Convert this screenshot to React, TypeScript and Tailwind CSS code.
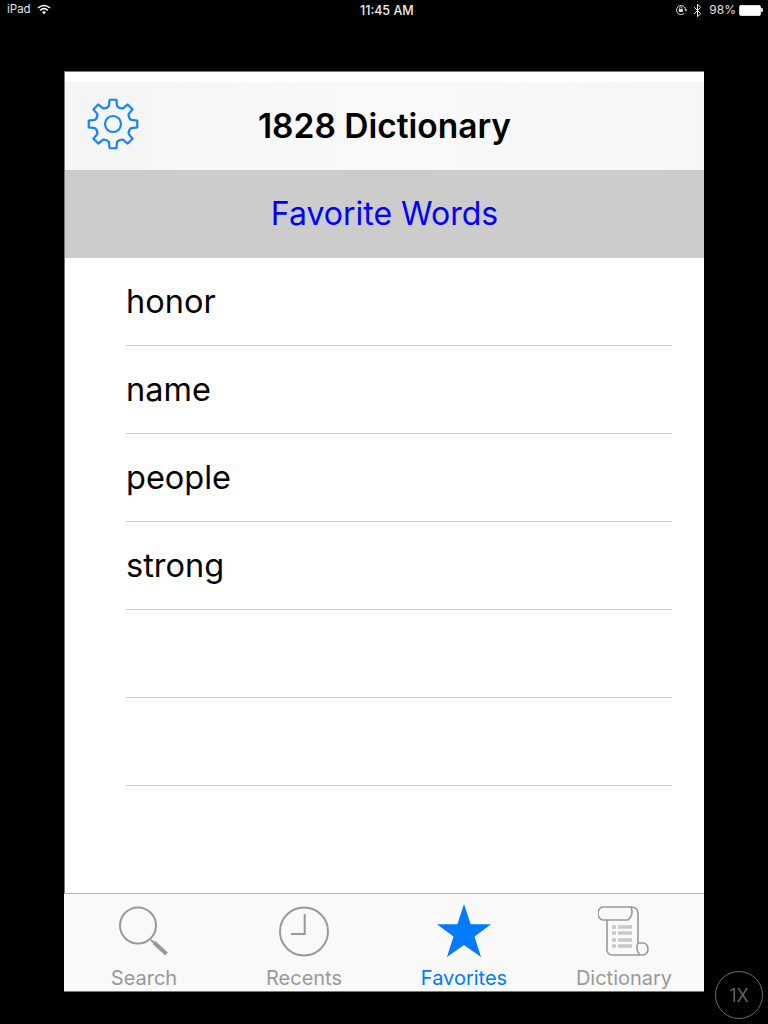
import React from 'react';
import { Bluetooth } from 'lucide-react';

const words = ['honor', 'name', 'people', 'strong', '', ''];

const gearPath = () => {
  const teeth = 8;
  const pts: string[] = [];
  const step = (Math.PI * 2) / teeth;
  for (let i = 0; i < teeth; i++) {
    const a = i * step - Math.PI / 2;
    const p = (r: number, d: number) =>
      `${(26 + r * Math.cos(a + d)).toFixed(2)} ${(26 + r * Math.sin(a + d)).toFixed(2)}`;
    pts.push(`${i === 0 ? 'M' : 'L'}${p(18.5, -0.22)}`);
    pts.push(`L${p(24.5, -0.14)}`);
    pts.push(`L${p(24.5, 0.14)}`);
    pts.push(`L${p(18.5, 0.22)}`);
    pts.push(`Q${p(16.5, step / 2)} ${p(18.5, step - 0.22)}`);
  }
  return pts.join(' ') + ' Z';
};

const StatusBar = () => (
  <div className="relative flex h-[20px] items-center justify-between pl-[7px] pr-[5px] text-[12px] text-white">
    <div className="flex items-center gap-[6px]">
      <span className="text-[11.5px] text-[#e5e5e5]">iPad</span>
      <svg width="14" height="11" viewBox="0 0 14 11" className="mb-[2px]">
        <path d="M1 4 Q7 -1 13 4" fill="none" stroke="#fff" strokeWidth="1.6" />
        <path d="M3.2 6.3 Q7 3 10.8 6.3" fill="none" stroke="#fff" strokeWidth="1.6" />
        <path d="M5 8 Q7 6.6 9 8 L7 10.4 Z" fill="#fff" />
      </svg>
    </div>
    <span className="absolute left-[360px] top-[2px] text-[12.5px] font-medium text-[#eee]">11:45 AM</span>
    <div className="flex items-center gap-[2px]">
      <svg width="13" height="12" viewBox="0 0 13 12">
        <path d="M10.5 6 A4.5 4.5 0 1 0 9 9.4" fill="none" stroke="#ddd" strokeWidth="1" />
        <path d="M9.5 5.5 L12.5 5.5 L11 7.4 Z" fill="#ddd" />
        <rect x="3.8" y="5" width="4" height="3" fill="#ddd" />
        <path d="M4.6 5 V4 A1.2 1.2 0 0 1 7 4 V5" fill="none" stroke="#ddd" strokeWidth="0.8" />
      </svg>
      <Bluetooth size={15} strokeWidth={1.6} className="text-[#eee]" />
      <span className="ml-[2px] text-[#e5e5e5]">98%</span>
      <div className="ml-[1px] flex items-center">
        <div className="h-[11px] w-[22px] rounded-[2px] border border-[#ddd] bg-white" />
        <div className="h-[4px] w-[2px] rounded-r-[1px] bg-[#ddd]" />
      </div>
    </div>
  </div>
);

const TabItem = ({ label, active, children }: { label: string; active?: boolean; children: React.ReactNode }) => (
  <div className="flex flex-1 flex-col items-center">
    <div className="flex h-[52px] w-[60px] items-center justify-center">{children}</div>
    <span className={`mt-[10px] text-[20px] leading-[22px] ${active ? 'text-[#007aff]' : 'text-[#999999]'}`}>
      {label}
    </span>
  </div>
);

export default function App() {
  return (
    <div className="relative flex h-[1024px] w-[768px] flex-col items-center overflow-hidden bg-black font-['Inter','Liberation_Sans',sans-serif]">
      <div className="w-full">
        <StatusBar />
      </div>

      {/* App window */}
      <div className="mt-[51px] flex h-[921px] w-[640px] flex-col border-l border-t border-b border-[#777777] bg-white">
        <div className="mt-[10px] flex h-[88px] items-center justify-center bg-gradient-to-r from-[#f5f5f5] via-[#f9f9f9] to-[#f6f6f6] pt-[1px]">
          <span className="absolute left-[87px] top-[98px]">
            <svg width="52" height="52" viewBox="0 0 52 52">
              <path d={gearPath()} fill="none" stroke="#1a82fb" strokeWidth="2.2" strokeLinejoin="round" />
              <circle cx="26" cy="26" r="8" fill="none" stroke="#1a82fb" strokeWidth="2.2" />
            </svg>
          </span>
          <h1 className="text-[33.5px] font-semibold text-black">1828 Dictionary</h1>
        </div>
        <div className="flex h-[88px] items-center justify-center bg-[#cccccc] text-[32px] text-[#0000ff]">
          Favorite Words
        </div>

        <div className="flex-1 pl-[61px] pr-[32px]">
          {words.map((word, i) => (
            <div key={i} className="flex h-[88px] items-center border-b border-[#c8c8c8] pt-[1px] text-[32.5px] text-black">
              {word}
            </div>
          ))}
        </div>

        <div className="-ml-[1px] flex h-[98px] border-t border-[#b2b2b2] bg-[#f9f9f9] pt-[11px]">
          <TabItem label="Search">
            <svg width="52" height="52" viewBox="0 0 52 52">
              <circle cx="20" cy="20.5" r="18" fill="none" stroke="#999999" strokeWidth="2" />
              <path d="M33 35 L37 38.5" stroke="#999999" strokeWidth="2" />
              <path d="M36 37.5 L48.5 49" stroke="#999999" strokeWidth="4" />
            </svg>
          </TabItem>
          <TabItem label="Recents">
            <svg width="52" height="52" viewBox="0 0 52 52">
              <circle cx="26" cy="26.5" r="24" fill="none" stroke="#999999" strokeWidth="2" />
              <path d="M26.7 9 V29 H13" fill="none" stroke="#999999" strokeWidth="2" />
            </svg>
          </TabItem>
          <TabItem label="Favorites" active>
            <svg width="56" height="54" viewBox="0 0 56 54">
              <path d="M28 0 L34.6 20.3 L55 20.3 L38.5 32.5 L45 53 L28 41 L11 53 L17.5 32.5 L1 20.3 L21.4 20.3 Z" fill="#007aff" />
            </svg>
          </TabItem>
          <TabItem label="Dictionary">
            <svg width="52" height="52" viewBox="0 0 52 52" fill="none" stroke="#999999" strokeWidth="1.6">
              <path d="M5 2 H34 A6 6 0 0 1 40 8 V38" />
              <path d="M33 2 Q36 10 30 15 H5 A5 6.5 0 0 1 5 2" />
              <path d="M9 15 V45 A5 5 0 0 0 14 50 H45 A5 6 0 0 0 45 38 H40 Q37 44 42 50" />
              <g stroke="#c8c8c8" strokeWidth="3.5">
                <path d="M14 22 H18" />
                <path d="M20 22 H34" />
                <path d="M14 28 H18" />
                <path d="M20 28 H34" />
                <path d="M14 35 H18" />
                <path d="M20 35 H34" />
                <path d="M14 41 H18" />
                <path d="M20 41 H34" />
              </g>
            </svg>
          </TabItem>
        </div>
      </div>

      {/* simulator scale badge */}
      <div className="absolute left-[715px] top-[971px] flex h-[48px] w-[48px] items-center justify-center rounded-full border border-[#6b6b6b] text-[18px] text-[#5f5f5f]">
        1X
      </div>
    </div>
  );
}
